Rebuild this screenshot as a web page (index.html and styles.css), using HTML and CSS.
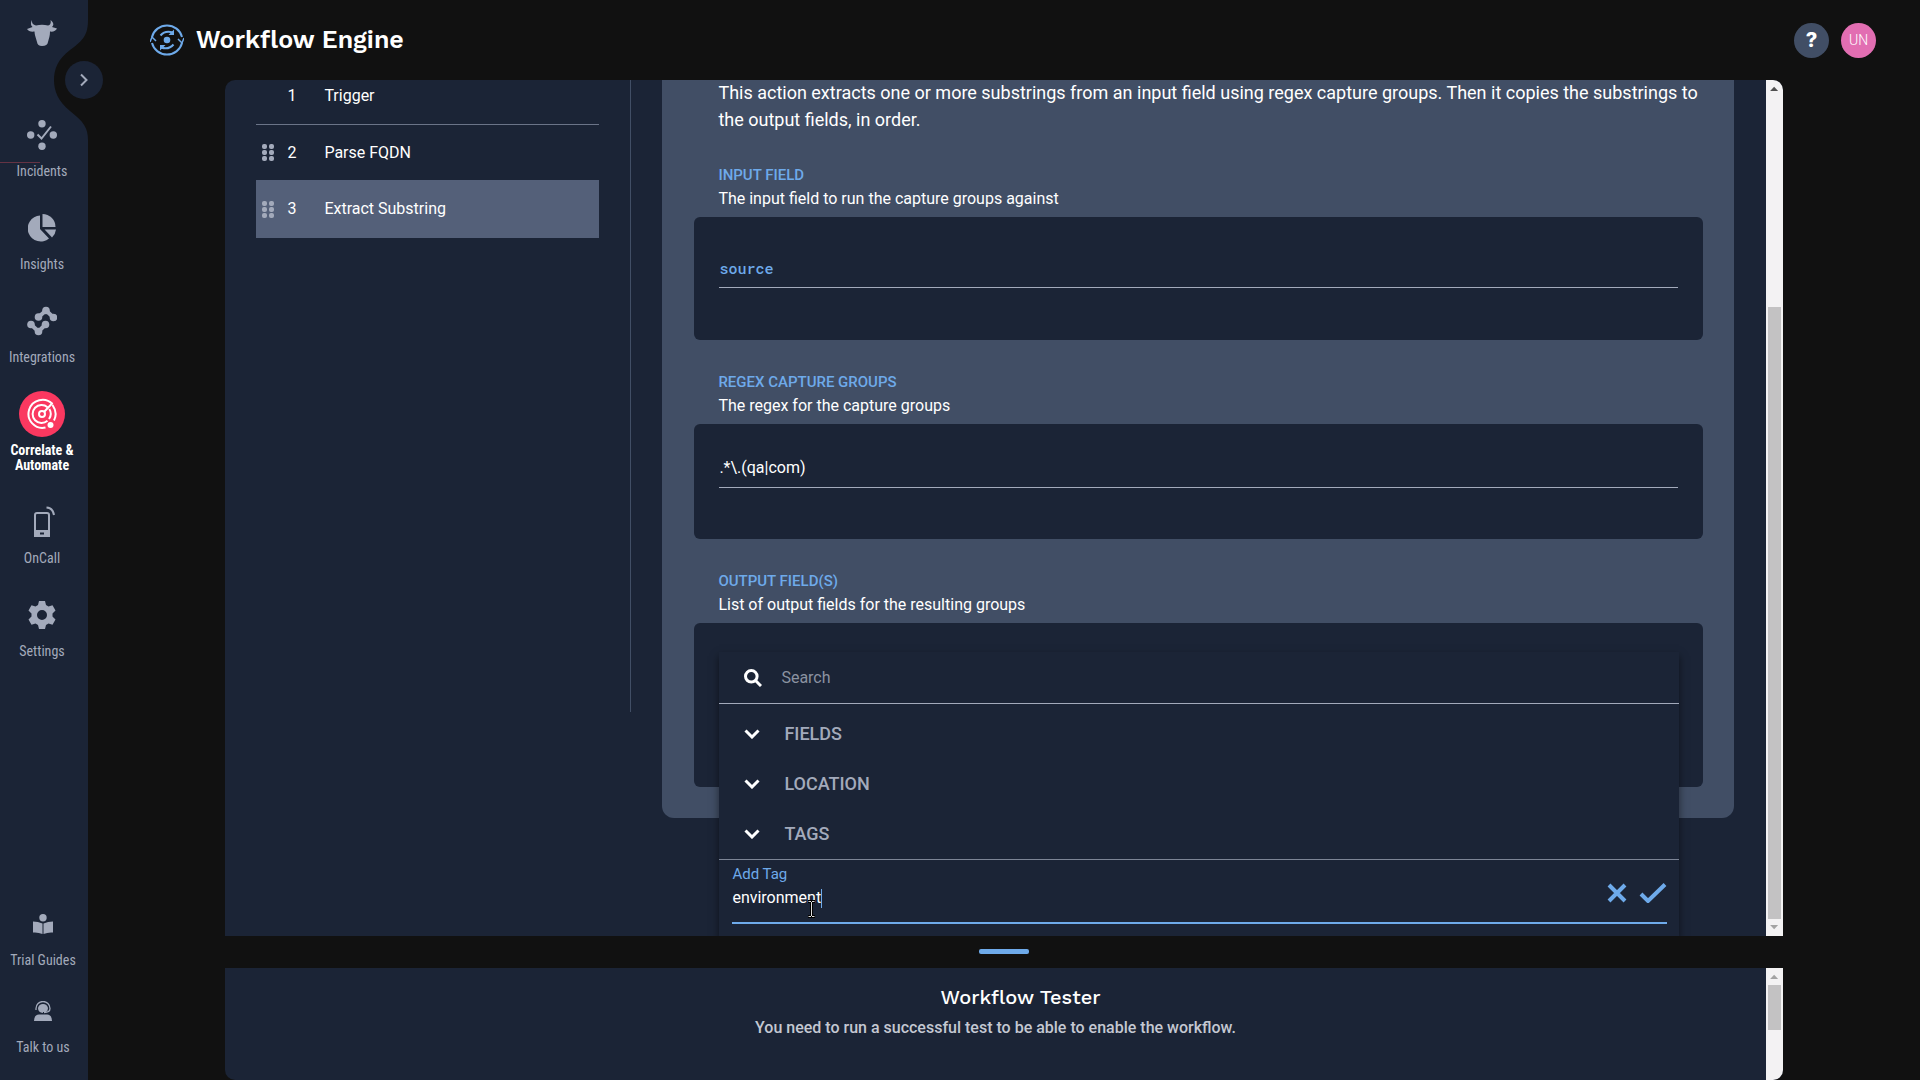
FILE: index.html
```html
<!DOCTYPE html>
<html lang="en">
<head>
<meta charset="utf-8">
<title>Workflow Engine</title>
<link rel="stylesheet" href="styles.css">
</head>
<body>
<aside class="sidebar">
  <svg class="notch" width="34" height="120" viewBox="54 20 34 120" aria-hidden="true"><path d="M88 20C88 34 84 40 70 50C58 59 54 69 54 80C54 91 58 101 70 111C84 122 88 128 88 140Z"/></svg>
  <span class="scanline"></span>
  <button class="expand" aria-label="Expand navigation"><svg width="10" height="14" viewBox="0 0 10 14" fill="none" stroke="currentColor" stroke-width="2"><path d="M2 1.500l5.500 5.500L2 12.500"/></svg></button>
  <a class="logo" href="#" aria-label="Home"><svg width="30" height="26" viewBox="0 0 30 26" fill="currentColor"><path d="M5 0C4.500 3 6 5 9 5.500Q15 4 21 5.500C24 5 24 2 23.500 0C27 3 27 5 25 7L30 8.500C29 11 26 12 23 11.500C23 16 22 18 21 22Q20.500 26 15 26Q10.500 26 10 22C9 18 7.500 15 7.500 11.500C4 12 1 11 0 9L5.500 7C3.500 5 3.500 3 5 0Z"/></svg></a>
  <nav class="nav">
    <a class="item" href="#"><span class="icon"><svg width="30" height="30" viewBox="0 0 30 30" fill="currentColor"><circle cx="15" cy="3.700" r="3.700"/><circle cx="15" cy="26.300" r="3.700"/><circle cx="3.700" cy="15" r="3.700"/><circle cx="26.300" cy="15" r="3.700"/><path d="M10.500 14.500l4 4L24 6.500" fill="none" stroke="currentColor" stroke-width="2"/></svg></span>Incidents</a>
    <a class="item" href="#"><span class="icon"><svg width="28" height="28" viewBox="0 0 28 28" fill="currentColor"><path d="M12 1.500V15l9 9.500A13 13 0 1 1 12 1.500Z"/><path d="M14.500 0A13 13 0 0 1 27.500 13H14.500Z"/><path d="M16.500 15.500H28Q27.500 20 24 23.500Z"/></svg></span>Insights</a>
    <a class="item" href="#"><span class="icon"><svg width="30" height="30" viewBox="0 0 30 30" fill="currentColor" stroke="currentColor" stroke-width="4"><path d="M4 18.500L11.500 25.500L18.500 18.500M11.500 11L19 4.500L26.500 11.500" fill="none" stroke-linejoin="round"/><g stroke="none"><circle cx="4" cy="18.500" r="3.800"/><circle cx="11.500" cy="25.500" r="3.800"/><circle cx="18.500" cy="18.500" r="3.800"/><circle cx="11.500" cy="11" r="3.800"/><circle cx="19" cy="4.500" r="3.800"/><circle cx="26.500" cy="11.500" r="3.800"/></g></svg></span>Integrations</a>
    <a class="item active" href="#"><span class="icon"><svg width="30" height="32" viewBox="0 0 30 32" fill="none" stroke="#fff" stroke-width="2"><path d="M18.500 29.500A14 14 0 1 1 25.500 6M25.500 7Q31 15 27 22.500"/><path d="M20.500 22.800A9 9 0 1 1 20.500 9.200M22.300 11A9 9 0 0 1 22 21"/><circle cx="15" cy="16" r="3"/><path d="M17 14l8.500-9"/><circle cx="23.500" cy="27" r="3" fill="#fff" stroke="none"/></svg></span>Correlate &amp;<br>Automate</a>
    <a class="item" href="#"><span class="icon"><svg width="28" height="32" viewBox="-7 0 28 32" fill="none" stroke="currentColor" stroke-width="2"><rect x="0" y="7" width="14" height="23" rx="2"/><path d="M0 25H14V30H0Z" fill="currentColor"/><path d="M5 27.500h4" stroke="#1b2436"/><path d="M11.500 1.500Q18 2 19 9" stroke-width="2"/></svg></span>OnCall</a>
    <a class="item" href="#"><span class="icon"><svg width="28" height="28" viewBox="0 0 28 28" fill="currentColor" fill-rule="evenodd"><path d="M11 0h6l1 4 2.500 1.500 4-1.200 3 5.200-3 3v3l3 3-3 5.200-4-1.200L18 24l-1 4h-6l-1-4-2.500-1.500-4 1.200-3-5.200 3-3v-3l-3-3 3-5.200 4 1.200L10 4ZM14 9a5 5 0 1 0 0 10a5 5 0 1 0 0-10Z"/></svg></span>Settings</a>
  </nav>
  <nav class="nav support">
    <a class="item" href="#"><span class="icon"><svg width="20" height="20" viewBox="0 0 20 20" fill="currentColor"><circle cx="10" cy="3.700" r="3.700"/><path d="M0 7.500Q5 7.500 9.500 9.500V20Q5 18 0 18.500ZM20 7.500Q15 7.500 10.500 9.500V20Q15 18 20 18.500Z"/></svg></span>Trial Guides</a>
    <a class="item" href="#"><span class="icon"><svg width="18" height="20" viewBox="0 0 18 20" fill="currentColor"><path d="M0 20Q0 14 5 13.500H13Q18 14 18 20Z"/><path d="M4 7Q5 3 9 3T14 7Q14 10 12 11H9V12Q4 11.500 4 7Z"/><path d="M2 9V7.500A7 7 0 0 1 16 7.500Q16 11.500 10 11.500" fill="none" stroke="currentColor" stroke-width="1.300"/></svg></span>Talk to us</a>
  </nav>
</aside>

<div class="page">
  <header class="header">
    <svg width="34" height="34" viewBox="0 0 34 34" fill="none" stroke="#6eaaea" stroke-width="2"><path d="M2 14A15.500 15.500 0 0 1 32 14M32 20A15.500 15.500 0 0 1 2 20"/><path d="M0 19l2-5 4 4M34 15l-2 5-4-4" stroke-width="1.500"/><circle cx="17" cy="17" r="3.300" fill="#6eaaea" stroke="none"/><path d="M10.500 12.500Q15 7 23 9.500M23.500 21.500Q19 27 11 24.500"/><path d="M24 6.500v5.500h-5.500ZM10 27.500v-5.500h5.500Z" fill="#6eaaea" stroke="none"/></svg>
    <h1>Workflow Engine</h1>
    <button class="round help" aria-label="Help">?</button>
    <button class="round avatar">UN</button>
  </header>

  <main class="workspace">
    <section class="panel editor">
      <div class="editor-body">
        <ol class="steps">
          <li><span></span><b>1</b>Trigger</li>
          <li><svg width="12" height="17" viewBox="0 0 12 17" fill="currentColor"><g id="dots"><rect width="5" height="5" rx="2"/><rect x="7" width="5" height="5" rx="2"/><rect y="6" width="5" height="5" rx="2"/><rect x="7" y="6" width="5" height="5" rx="2"/><rect y="12" width="5" height="5" rx="2"/><rect x="7" y="12" width="5" height="5" rx="2"/></g></svg><b>2</b>Parse FQDN</li>
          <li class="selected"><svg width="12" height="17" viewBox="0 0 12 17" fill="currentColor"><use href="#dots"/></svg><b>3</b>Extract Substring</li>
        </ol>
        <form class="card">
          <p class="summary">This action extracts one or more substrings from an input field using regex capture groups. Then it copies the substrings to the output fields, in order.</p>
          <div class="field">
            <label for="source">INPUT FIELD</label>
            <p>The input field to run the capture groups against</p>
            <div class="box"><input id="source" class="line code" type="text" value="source"></div>
          </div>
          <div class="field">
            <label for="regex">REGEX CAPTURE GROUPS</label>
            <p>The regex for the capture groups</p>
            <div class="box short"><input id="regex" class="line" type="text" value=".*\.(qa|com)"></div>
          </div>
          <div class="field">
            <label for="search">OUTPUT FIELD(S)</label>
            <p>List of output fields for the resulting groups</p>
            <div class="box output">
              <div class="menu">
                <div class="search"><svg width="18" height="18" viewBox="0 0 18 18" fill="none" stroke="#fff" stroke-width="3"><circle cx="7.300" cy="7.300" r="5.800"/><path d="M11.500 11.500l5.500 5.500"/></svg><input id="search" type="text" placeholder="Search"></div>
                <div class="groups">
                  <button type="button"><svg width="16" height="10" viewBox="0 0 16 10"><path d="M1.500 1.500L8 8l6.500-6.500"/></svg>FIELDS</button>
                  <button type="button"><svg width="16" height="10" viewBox="0 0 16 10"><path d="M1.500 1.500L8 8l6.500-6.500"/></svg>LOCATION</button>
                  <button type="button"><svg width="16" height="10" viewBox="0 0 16 10"><path d="M1.500 1.500L8 8l6.500-6.500"/></svg>TAGS</button>
                </div>
                <div class="add">
                  <div class="add-line">
                    <div class="add-text">
                      <label for="tag">Add Tag</label>
                      <div class="entry"><input id="tag" type="text" value="environment"><span class="caret"></span>
                        <svg class="pointer" width="9" height="18" viewBox="0 0 9 18" fill="none"><path d="M1 1.500h7M1 16.500h7M4.500 2v14" stroke="#000" stroke-width="3"/><path d="M1.500 1.500h2.500M5 1.500h2.500M1.500 16.500h2.500M5 16.500h2.500M4.500 2v14" stroke="#ddd"/></svg>
                      </div>
                    </div>
                    <button type="button" aria-label="Cancel"><svg width="20" height="20" viewBox="0 0 20 20"><path d="M2 2l16 16M18 2L2 18"/></svg></button>
                    <button type="button" aria-label="Confirm"><svg width="28" height="20" viewBox="0 0 28 20"><path d="M2 11l7 7L26 1.500"/></svg></button>
                  </div>
                </div>
              </div>
            </div>
          </div>
        </form>
      </div>
      <div class="scrollbar"><i class="up"></i><span class="track"><span class="thumb main-thumb"></span></span><i class="down"></i></div>
    </section>
    <div class="splitter"><span></span></div>
    <section class="panel tester">
      <div class="tester-body">
        <h2>Workflow Tester</h2>
        <p>You need to run a successful test to be able to enable the workflow.</p>
      </div>
      <div class="scrollbar"><i class="up dim"></i><span class="track"><span class="thumb small-thumb"></span></span></div>
    </section>
  </main>
</div>
</body>
</html>
```
FILE: styles.css
```css
* { box-sizing: border-box; }
body {
  margin: 0;
  height: 100vh;
  display: flex;
  overflow: hidden;
  background: #111;
  color: #fff;
  font: 16px/24px Roboto, sans-serif;
}
h1, h2, p, ol { margin: 0; padding: 0; }
button, input { font: inherit; color: inherit; background: none; border: 0; padding: 0; outline: 0; }
a { color: inherit; text-decoration: none; }
svg { display: block; flex: none; }

/* Sidebar */
.sidebar {
  position: relative;
  flex: none;
  width: 88px;
  display: flex;
  flex-direction: column;
  background: #1b2436;
  color: #a3aabb;
}
.notch { position: absolute; right: 0; top: 20px; fill: #111; }
.scanline { position: absolute; left: 0; top: 162px; width: 40px; height: 1px; background: #653344; }
.expand {
  position: absolute;
  left: 65px;
  top: 61px;
  width: 38px;
  height: 38px;
  border-radius: 50%;
  background: #1b2436;
  display: grid;
  place-items: center;
}
.logo { width: 84px; height: 112px; padding-top: 20px; display: flex; justify-content: center; }
.nav { width: 84px; display: flex; flex-direction: column; gap: 26px; }
.support { margin-top: auto; width: 86px; gap: 20px; padding-bottom: 25px; }
.item {
  display: flex;
  flex-direction: column;
  align-items: center;
  text-align: center;
  font: 14px/15px "Roboto Condensed", "Liberation Sans Narrow", Roboto, sans-serif;
}
.icon { width: 46px; height: 46px; margin-bottom: 6px; display: grid; place-items: center; }
.active { color: #fff; font-weight: 700; }
.active .icon { border-radius: 50%; background: #fa3860; }

/* Header */
.page { flex: 1; min-width: 0; display: flex; flex-direction: column; }
.header { height: 80px; flex: none; display: flex; align-items: center; padding: 0 44px 0 62px; }
h1 { margin-left: 12px; margin-right: auto; font: 600 25px/32px "Work Sans", Inter, sans-serif; }
.round { width: 35px; height: 35px; border-radius: 50%; margin-left: 12px; }
.help { background: #414e65; font: 800 20px/35px Inter, sans-serif; }
.avatar { background: #e26eb2; font-size: 14px; font-weight: 300; }

/* Panels */
.workspace { flex: 1; min-height: 0; display: flex; flex-direction: column; padding: 0 7.5%; }
.panel { display: flex; background: #1b2436; overflow: hidden; }
.editor { flex: 1; min-height: 0; border-radius: 10px 10px 0 0; }
.editor-body { flex: 1; min-width: 0; display: flex; align-items: flex-start; padding: 0 32px 0 31px; }
.steps { flex: 0 0 375px; height: 632px; padding-right: 31px; border-right: 1px solid #414e65; list-style: none; }
.steps li { display: flex; align-items: center; height: 55px; padding-left: 6px; color: #fff; }
.steps li:first-child { height: 45px; padding-bottom: 12px; border-bottom: 1px solid #6b7488; }
.steps li.selected { height: 58px; background: #546079; }
.steps svg, .steps span { width: 12px; flex: none; color: #a3aabb; }
.steps b { width: 37px; margin-left: 13px; font-weight: 400; }

.card { flex: 1; min-width: 0; margin-left: 31px; padding: 0 31px 31px 32px; background: #414e65; border-radius: 0 0 12px 12px; }
.summary { padding-left: 24px; margin-top: -1px; font-size: 18px; line-height: 27px; }
.field { padding-top: 31px; }
.field > label, .field > p { display: block; padding-left: 24px; line-height: 23px; }
.field > label { color: #6eaaea; font-size: 15px; font-weight: 500; }
.field > p { margin-bottom: 7px; }
.box { position: relative; height: 123px; padding: 31px 25px 0; background: #1b2436; border-radius: 6px; }
.box.short { height: 115px; padding-top: 24px; }
.box.output { height: 164px; }
.line { display: block; width: 100%; height: 40px; border-bottom: 1px solid #a3aabb; }
.code { color: #6eaaea; font: 500 15px/24px "Roboto Mono", "DejaVu Sans Mono", monospace; }

/* Field picker */
.menu { position: absolute; left: 25px; right: 24px; top: 29px; background: #1b2436; box-shadow: 0 4px 8px rgba(0, 0, 0, .5); }
.search { display: flex; align-items: center; height: 52px; padding-left: 25px; border-bottom: 1px solid #a3aabb; }
.search input { flex: 1; margin-left: 19px; }
.search input::placeholder { color: #8b92a1; opacity: 1; }
.groups { padding-top: 5px; display: flex; flex-direction: column; border-bottom: 1px solid #7d8596; }
.groups button { height: 50px; display: flex; align-items: center; padding-left: 25px; gap: 24px; color: #a3aabb; font-size: 18px; font-weight: 500; }
.groups svg { fill: none; stroke: #fff; stroke-width: 3px; }
.add { padding: 3px 12px 13px 13px; }
.add-line { display: flex; align-items: center; height: 61px; border-bottom: 2px solid #6eaaea; }
.add-text { flex: 1; height: 59px; }
.add-text label { display: block; color: #6eaaea; font-size: 15px; line-height: 23px; }
.entry { position: relative; display: flex; align-items: center; height: 24px; }
.entry input { field-sizing: content; }
.caret { width: 1px; height: 19px; background: #6eaaea; }
.pointer { position: absolute; left: 75px; top: 14px; }
.add-line button { margin-left: 12px; }
.add-line button svg { fill: none; stroke: #6eaaea; stroke-width: 4px; }

/* Scrollbars */
.scrollbar { flex: none; width: 17px; display: flex; flex-direction: column; align-items: center; background: #f3f2f3; }
.scrollbar i { width: 8px; height: 17px; flex: none; background: #505050; clip-path: polygon(0 65%, 50% 40%, 100% 65%); }
.scrollbar .down { background: #a3a3a3; clip-path: polygon(0 35%, 50% 60%, 100% 35%); }
.scrollbar .dim { background: #a3a3a3; }
.track { flex: 1; width: 13px; display: flex; flex-direction: column; }
.thumb { background: #c3c2c3; }
.main-thumb { margin-top: auto; height: 74.5%; }
.small-thumb { height: 45px; }

/* Tester */
.splitter { flex: none; height: 32px; padding-bottom: 2px; display: grid; place-items: center; }
.splitter span { width: 50px; height: 5px; border-radius: 2px; background: #6eaaea; }
.tester { flex: none; height: 112px; border-radius: 0 0 10px 10px; }
.tester-body { flex: 1; padding-top: 16px; text-align: center; }
h2 { padding-left: 50px; font: 500 20px/26px "Work Sans", Inter, sans-serif; }
.tester-body p { margin-top: 6px; color: #c4c8d2; font-weight: 500; }
```
